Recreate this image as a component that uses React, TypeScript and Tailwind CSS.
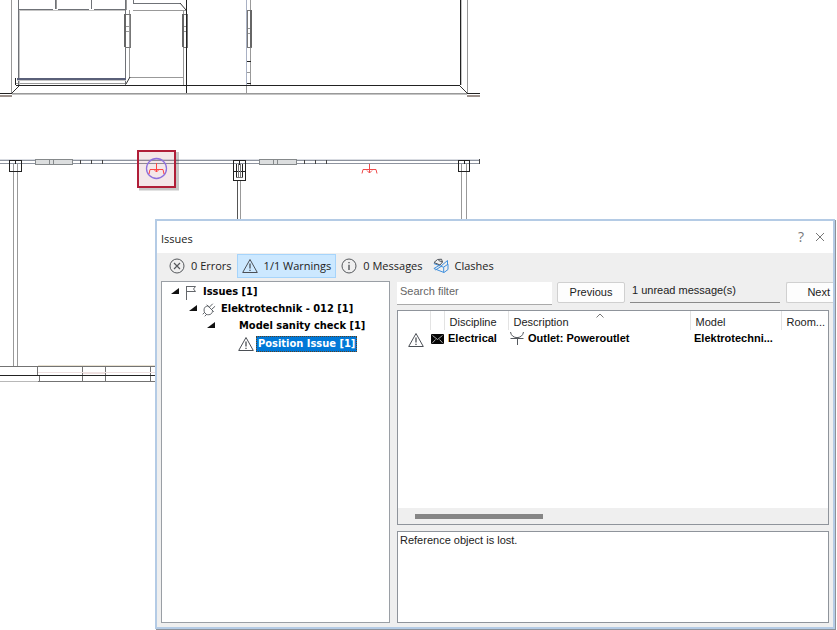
import { useState } from 'react';
import type { ReactNode } from 'react';

type Filter = 'errors' | 'warnings' | 'messages' | 'clashes';

function WarningIcon() {
  return (
    <svg className="shrink-0" width="16" height="16" viewBox="0 0 16 16" fill="none" stroke="#4b4f55" strokeLinejoin="round">
      <path d="M8 1.5 15.3 14.5H.7Z" />
      <path d="M8 5.5V10.5M8 11.7V13" strokeWidth="1.3" />
    </svg>
  );
}

function ErrorIcon() {
  return (
    <svg className="shrink-0" width="16" height="16" viewBox="0 0 16 16" fill="none" stroke="#55585c">
      <circle cx="8" cy="8" r="7" />
      <path d="M5 5 11 11M11 5 5 11" strokeWidth="1.2" />
    </svg>
  );
}

function InfoIcon() {
  return (
    <svg className="shrink-0" width="16" height="16" viewBox="0 0 16 16" fill="none" stroke="#55585c">
      <circle cx="8" cy="8" r="7" />
      <path d="M8 4V5.3M8 6.8V12" strokeWidth="1.4" />
    </svg>
  );
}

function ClashIcon() {
  return (
    <svg className="shrink-0" width="16" height="16" viewBox="0 0 16 16" fill="none" stroke="#3f8fdd" strokeLinejoin="round">
      <path d="M.8 5.5 10.5 9.2 15 6.2V11.5L11 14.5.8 10.5M10.7 9.2V14.3M1 10.5 6 7.5M2.5 12 8 8.5" />
      <path d="M1 4.5 4.5 1.5 8.5 1.2 9.5 4 5.5 2.5M9.5 4 7 7 1 4.5" stroke="#50555c" />
      <path d="M8 8 14.5 2.5V6.2" />
    </svg>
  );
}

function FlagIcon() {
  return (
    <svg className="shrink-0" width="12" height="16" viewBox="0 0 12 16" fill="none" stroke="#63666b">
      <path d="M1.5 1V15M1 1.5H10.5L8.5 4 10.5 6.5H1.5" />
    </svg>
  );
}

function PlugIcon() {
  return (
    <svg className="shrink-0" width="14" height="14" viewBox="0 0 14 14" fill="none" stroke="#5f6368" strokeLinecap="round">
      <path d="M5 2 11.5 8.5M6 3C3 2.8 1 5.5 2.5 9.5M10.5 7.5C10.8 10.8 8 12.5 4.5 11.5M2.5 9.5 1 11M4.5 11.5 3 13M2.5 9.5 4.5 11.5M7.5 4 10.5 1M9.5 6.5 12.8 3.5" />
    </svg>
  );
}

function MailIcon() {
  return (
    <svg width="13" height="10" viewBox="0 0 13 10">
      <rect width="13" height="10" rx="1" fill="#050505" />
      <path d="M1.5 1.5 6.5 5.5 11.5 1.5M1.5 8.8 4.5 5.5M11.5 8.8 8.5 5.5" fill="none" stroke="#d5d5d5" strokeWidth=".8" />
    </svg>
  );
}

function OutletIcon() {
  return (
    <svg className="shrink-0" width="14" height="14" viewBox="0 0 14 14" fill="none" stroke="#55595e">
      <path d="M.5 1C1.500 8.500 12.500 8.500 13.500 1M.5 7.500H13.500M7.500 7.500V14" />
    </svg>
  );
}

function FloorPlan() {
  return (
    <svg className="absolute top-0 left-0" width="480" height="400" viewBox="0 0 480 400" fill="none" shapeRendering="crispEdges">
      <g stroke="#999">
        <path d="M11.5 0V94M126 0V10M129.5 10V77M183.5 10V85M250.5 0V85M467.5 0V93M12 93.5H467M246.5 85V93M129 77.5H184M133 10.5H186M56.5 0V9M16 83.5H126" />
        <path d="M13.5 163V366M17.5 163V366M240.5 181V219M461.5 163V219M466.5 163V219" />
        <path d="M126 26.5H130M126 31.5H130M183 26.5H186M183 31.5H186M247 28.5H250M247 33.5H250M247 72.5H250" />
      </g>
      <path d="M19.5 10V85M18 10.5H126M461.5 0V85M12 94.5H467" stroke="#c4c4c4" />
      <g stroke="#6f7277">
        <path d="M18.5 0V86M125.5 0V85M133.5 0V3M19 9.5H53M58 9.5H89M94 9.5H125M55.5 0V9M91.5 0V9M133 3.5H180" />
        <path d="M246.5 0V85" stroke="#a9b1c4" />
      </g>
      <path d="M125 14.5H130V47.5H125ZM183 14.5H187V47.5H183ZM247 10.5H251V47.5H247Z" stroke="#777" />
      <path d="M125 14V47M183 14V47M251 10V47" stroke="#666" strokeWidth="2" />
      <path d="M186.5 0V93M460.5 0V85M16 85.5H460M0 93.5H12M467 93.5H480M247 61.5H251M247 83.5H251M15.5 78V85" stroke="#222" />
      <path d="M12 93 19 86M460 86 467 93M180 3 186 10M126 84 130 77" stroke="#333" shapeRendering="auto" />
      <path d="M17 78.5H126" stroke="#5a6079" strokeWidth="2" />
      <path d="M17 80.5H126" stroke="#c5c5c5" />
      <path d="M0 95.5H12M467 95.5H480" stroke="#9c918c" strokeWidth="2" />

      <path d="M0 160.5H480M0 163.5H480" stroke="#8e949f" />
      <path d="M0 159.5H480" stroke="#d9dce2" />
      <g fill="#dcdedf" stroke="#85898b">
        <rect x="35.5" y="159.5" width="37" height="5" />
        <rect x="259.5" y="159.5" width="37" height="5" />
        <path d="M49.5 160V164M53.5 160V164M273.5 160V164M277.5 160V164" />
      </g>
      <path d="M80.5 160V164M91.5 160V164M102.5 160V164M304.5 160V164M315.5 160V164M326.5 160V164M479.5 159V164" stroke="#444" />
      <g stroke="#222">
        <path d="M9.5 160.5H21.5V171.5H9.5ZM15.5 160V164M458.5 160.5H469.5V171.5H458.5ZM464.5 160V164" />
        <path d="M233.5 160.5H245.5V180.5H233.5ZM233 171.5H246M236.5 164V177M242.5 164V177M239.5 160V165" />
        <path d="M236 177.5H243M238.5 164V177M240.5 164V177" stroke="#777" />
        <path d="M237.5 181V219" stroke="#555" />
      </g>

      <path d="M0 366.5H155M38 381.5H155M37.5 366V376M39.5 376V381M82.5 366V381M105.5 366V381M150.5 366V381" stroke="#737373" />
      <path d="M38 365.5H155" stroke="#e9e2d2" />
      <path d="M38 372.5H155M83 373.5H105" stroke="#eee0e0" />
      <path d="M0 375.5H155" stroke="#222" />
      <path d="M0 381.5H38" stroke="#b8b8b8" />

      <g shapeRendering="auto">
        <path d="M139 189H177.5V152" stroke="#000" strokeOpacity=".22" strokeWidth="3" />
        <rect x="138" y="151" width="37" height="36" fill="#91172a" fillOpacity=".1" stroke="#b01e38" strokeWidth="2" />
        <circle cx="156.5" cy="168.5" r="10" stroke="#8d70dd" strokeWidth="1.3" />
        <path d="M156.5 163V172M154 169.5 156.5 172 159 169.5M149 174 150 169.5H163L164 174" stroke="#ff4545" />
        <path d="M369.5 164V173M367 170.5 369.5 173 372 170.5M362 173.5 363 169.5H376L377 173.5" stroke="#ef4c4c" />
      </g>
    </svg>
  );
}

interface TreeRowProps {
  label: string;
  indent: string;
  icon?: ReactNode;
  leaf?: boolean;
  selected?: boolean;
}

function TreeRow({ label, indent, icon, leaf, selected }: TreeRowProps) {
  return (
    <li role="treeitem" aria-selected={!!selected} className={`flex h-[17px] items-center whitespace-nowrap ${indent}`}>
      {!leaf && (
        <svg className="mb-1 shrink-0" width="8" height="6" viewBox="0 0 8 6">
          <path d="M8 0V6H0Z" fill="#111" />
        </svg>
      )}
      <span className={`flex shrink-0 items-center justify-center ${leaf ? 'w-4' : 'w-6'}`}>{icon}</span>
      <span className={selected ? 'ml-0.5 bg-[#0078d7] px-0.5 leading-4 text-white outline-1 outline-dotted outline-[#5c4020] -outline-offset-1' : ''}>
        {label}
      </span>
    </li>
  );
}

const filters: { id: Filter; label: string; icon: ReactNode }[] = [
  { id: 'errors', label: '0 Errors', icon: <ErrorIcon /> },
  { id: 'warnings', label: '1/1 Warnings', icon: <WarningIcon /> },
  { id: 'messages', label: '0 Messages', icon: <InfoIcon /> },
  { id: 'clashes', label: 'Clashes', icon: <ClashIcon /> },
];

export default function App() {
  const [active, setActive] = useState<Filter>('warnings');
  const [search, setSearch] = useState('');

  return (
    <div className="relative min-h-screen overflow-hidden bg-white">
      <FloorPlan />

      <section
        aria-label="Issues"
        className="absolute top-[219px] right-0.5 bottom-px left-[155px] flex flex-col border-2 border-[#b4cbe5] bg-[#efefef] font-['Liberation_Sans',sans-serif] text-[11px] text-[#222] shadow-[1px_1px_0_0_#8d9299]"
      >
        <header className="flex h-8 shrink-0 items-center justify-between bg-white pr-2 pl-1 font-['Open_Sans',sans-serif]">
          <h1 className="pt-1 text-[11px]">Issues</h1>
          <div className="flex items-center gap-2 text-[#777]">
            <button aria-label="Help" className="w-3 text-[14px] leading-4">?</button>
            <button aria-label="Close">
              <svg width="10" height="10" viewBox="0 0 10 10" stroke="currentColor">
                <path d="M1 1 9 9M9 1 1 9" />
              </svg>
            </button>
          </div>
        </header>

        <div className="flex shrink-0 items-center py-px pl-[7px] font-['Open_Sans',sans-serif] text-[11px]">
          {filters.map((f) => (
            <button
              key={f.id}
              onClick={() => setActive(f.id)}
              className={`flex h-6 items-center gap-1.5 border px-1 whitespace-nowrap ${
                active === f.id ? 'border-[#a6d4fb] bg-[#cce8ff]' : 'border-transparent'
              }`}
            >
              {f.icon}
              <span>{f.label}</span>
            </button>
          ))}
        </div>

        <div className="flex min-h-0 flex-1 gap-[7px] px-1 pt-[2px] pb-1">
          <ul
            role="tree"
            className="w-[229px] shrink-0 border border-[#9a9fa5] bg-white pt-[2px] font-['DejaVu_Sans_Condensed','DejaVu_Sans',sans-serif] text-[11px] font-bold text-black"
          >
            <TreeRow label="Issues [1]" indent="pl-[9px]" icon={<FlagIcon />} />
            <TreeRow label="Elektrotechnik - 012 [1]" indent="pl-[27px]" icon={<PlugIcon />} />
            <TreeRow label="Model sanity check [1]" indent="pl-[45px]" />
            <TreeRow label="Position Issue [1]" indent="pl-[76px]" icon={<WarningIcon />} leaf selected />
          </ul>

          <div className="flex min-w-0 flex-1 flex-col">
            <div className="-mr-1 flex h-[29px] shrink-0 items-start overflow-hidden pt-px">
              <input
                aria-label="Search filter"
                placeholder="Search filter"
                value={search}
                onChange={(e) => setSearch(e.target.value)}
                className="h-[23px] min-w-0 flex-1 border-b border-[#aaa] bg-white px-[3px] pb-1 outline-none placeholder:text-[#666]"
              />
              <button className="ml-[5px] h-[21px] w-[68px] shrink-0 rounded-xs border border-[#d0d0d0] bg-[#fdfdfd]">Previous</button>
              <output className="ml-[5px] h-[21px] w-[150px] shrink-0 border-b border-[#8a8a8a] px-0.5 leading-4">
                1 unread message(s)
              </output>
              <button className="ml-[6px] h-[21px] w-[47px] shrink-0 rounded-l-xs border border-r-0 border-[#d0d0d0] bg-[#fdfdfd] pr-[3px] text-right">
                Next
              </button>
            </div>

            <div className="relative flex min-h-0 flex-1 flex-col justify-between border border-[#8f949b] bg-white">
              <table className="w-full table-fixed text-left leading-4 whitespace-nowrap">
                <colgroup>
                  <col className="w-8" />
                  <col className="w-[14px]" />
                  <col className="w-16" />
                  <col className="w-[182px]" />
                  <col className="w-[91px]" />
                  <col />
                </colgroup>
                <thead>
                  <tr className="h-[19px] [&>th]:border-r [&>th]:border-[#e3e3e3] [&>th]:pt-[3px] [&>th]:pl-[5px] [&>th]:font-normal [&>th:last-child]:border-0">
                    <th aria-label="Severity" />
                    <th aria-label="Unread" />
                    <th>Discipline</th>
                    <th>Description</th>
                    <th>Model</th>
                    <th>Room...</th>
                  </tr>
                </thead>
                <tbody>
                  <tr className="h-4 align-top font-bold text-black [&>td]:p-0">
                    <td><span className="flex justify-center pt-0.5 pl-1"><WarningIcon /></span></td>
                    <td><span className="flex pt-1 pl-px"><MailIcon /></span></td>
                    <td><span className="pl-1">Electrical</span></td>
                    <td><span className="flex items-center gap-1 pl-0.5"><OutletIcon />Outlet: Poweroutlet</span></td>
                    <td><span className="pl-1">Elektrotechni...</span></td>
                    <td />
                  </tr>
                </tbody>
              </table>
              <svg className="absolute top-0.5 left-[198px]" width="8" height="5" viewBox="0 0 8 5" fill="none" stroke="#777">
                <path d="M.5 4.5 4 1 7.5 4.5" />
              </svg>
              <div className="flex h-4 items-center bg-[#efefef] pl-[17px]">
                <div className="h-[5px] w-32 bg-[#858585]" />
              </div>
            </div>

            <textarea
              aria-label="Message"
              readOnly
              value="Reference object is lost."
              className="mt-[6px] h-[92px] shrink-0 resize-none border border-[#8f949b] bg-white px-0.5 leading-4 outline-none"
            />
          </div>
        </div>
      </section>
    </div>
  );
}
